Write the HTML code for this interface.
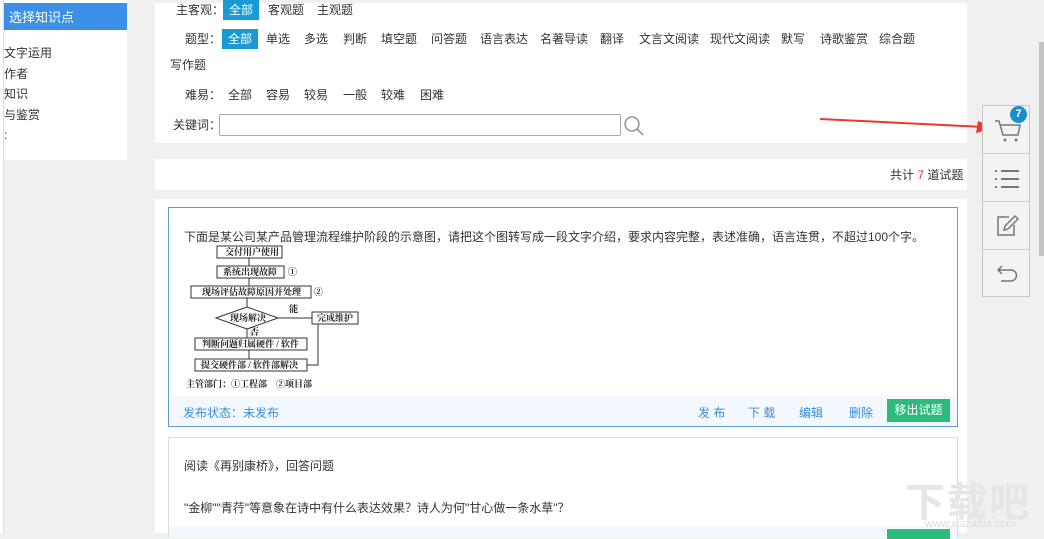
<!DOCTYPE html>
<html><head><meta charset="utf-8"><style>
*{margin:0;padding:0;box-sizing:border-box}
body{width:1044px;height:533px;overflow:hidden;background:#f0f0f0;font-family:"Liberation Sans","Noto Sans CJK SC",sans-serif;font-size:12px;color:#333;position:relative}
.a{position:absolute}
.side{left:4px;top:0;width:123px;height:160px;background:#fff}
.side .h{background:#3b8fe6;color:#fff;height:27px;margin-top:3px;padding:4px 0 0 5px;font-size:13px}
.side div.i{height:20.5px;line-height:20px;font-size:12px;color:#333}
.row span{position:absolute;top:0;line-height:20px}
.sel{background:#1a9ad2;color:#fff;padding:0 6px}
.tb{left:982px;top:105px;width:48px;height:192px;border:1px solid #c8c8c8;background:#f3f3f3}
.tb div{height:48px;border-bottom:1px solid #d0d0d0;position:relative}
</style></head><body>
<div class="a" style="left:0;top:0;width:4px;height:533px;background:#fff;border-right:1px solid #ddd"></div>
<div class="a side"><div class="h">选择知识点</div>
<div style="height:13px"></div>
<div class="i">文字运用</div><div class="i">作者</div><div class="i">知识</div><div class="i">与鉴赏</div><div class="i">:</div></div>

<div class="a" style="left:155px;top:3px;width:812px;height:140px;background:#fff"></div>
<div class="a" style="left:155px;top:159px;width:812px;height:31px;background:#fff"></div>
<div class="a" style="left:155px;top:199px;width:812px;height:334px;background:#fff"></div>

<div class="a row" style="left:0;top:0;width:900px;height:20px">
<span style="left:176px">主客观：</span><span class="sel" style="left:223px">全部</span><span style="left:268px">客观题</span><span style="left:317px">主观题</span></div>
<div class="a row" style="left:0;top:29px;width:960px;height:20px">
<span style="left:185px">题型：</span><span class="sel" style="left:222px">全部</span><span style="left:266px">单选</span><span style="left:304px">多选</span><span style="left:343px">判断</span><span style="left:381px">填空题</span><span style="left:431px">问答题</span><span style="left:480px">语言表达</span><span style="left:540px">名著导读</span><span style="left:600px">翻译</span><span style="left:639px">文言文阅读</span><span style="left:710px">现代文阅读</span><span style="left:781px">默写</span><span style="left:820px">诗歌鉴赏</span><span style="left:879px">综合题</span></div>
<div class="a row" style="left:0;top:55px;width:300px;height:20px"><span style="left:170px">写作题</span></div>
<div class="a row" style="left:0;top:85px;width:500px;height:20px">
<span style="left:185px">难易：</span><span style="left:228px">全部</span><span style="left:266px">容易</span><span style="left:304px">较易</span><span style="left:343px">一般</span><span style="left:381px">较难</span><span style="left:420px">困难</span></div>
<div class="a" style="left:173px;top:117px;line-height:16px">关键词：</div>
<div class="a" style="left:219px;top:114px;width:402px;height:22px;border:1px solid #aaa;border-radius:2px;background:#fff"></div>
<svg class="a" style="left:623px;top:114px" width="22" height="22"><circle cx="9" cy="10" r="7" fill="none" stroke="#888" stroke-width="1.3"/><line x1="14" y1="15" x2="20" y2="21" stroke="#888" stroke-width="1.3"/></svg>
<svg class="a" style="left:818px;top:115px" width="180" height="20"><path d="M2 4 L166 12" stroke="#e83a2f" stroke-width="2"/><path d="M160 6 L178 13 L158 18 Z" fill="#e83a2f"/></svg>

<div class="a" style="left:890px;top:167px;line-height:16px">共计 <span style="color:#d33">7</span> 道试题</div>

<div class="a" style="left:168px;top:207px;width:790px;height:220px;border:1px solid #5d9fc8;background:#fff">
<div style="position:absolute;left:15px;top:20px;font-size:12px">下面是某公司某产品管理流程维护阶段的示意图，请把这个图转写成一段文字介绍，要求内容完整，表述准确，语言连贯，不超过100个字。</div>
<svg style="position:absolute;left:15px;top:36px;font-family:'Liberation Serif','Noto Serif CJK SC',serif;font-size:9px;font-weight:bold" width="200" height="150">
<g fill="none" stroke="#333" stroke-width="1">
<rect x="33" y="2" width="65" height="12"/><rect x="33" y="22" width="67" height="12"/><rect x="7" y="42" width="120" height="12"/>
<path d="M32 74 L63 63 L94 74 L63 85 Z"/><rect x="128" y="68" width="46" height="12"/>
<rect x="11" y="94" width="112" height="12"/><rect x="11" y="115" width="112" height="12"/>
<path d="M65 14V22M65 34V42M63 54V63M63 85V94M65 106V115M94 74H128M123 121H134V80"/></g>
<g fill="#222"><text x="41" y="11">交付用户使用</text><text x="39" y="31">系统出现故障</text><text x="104" y="31">①</text><text x="18" y="51">现场评估故障原因并处理</text><text x="130" y="51">②</text>
<text x="46" y="77">现场解决</text><text x="105" y="68">能</text><text x="133" y="77">完成维护</text><text x="66" y="91">否</text>
<text x="18" y="103">判断问题归属硬件 / 软件</text><text x="17" y="124">提交硬件部 / 软件部解决</text><text x="2" y="143">主管部门：①工程部　②项目部</text></g></svg>
<div style="position:absolute;left:0;bottom:0;width:788px;height:30px;background:#f2f8fd">
<span style="position:absolute;left:14px;top:8px;color:#3a8ed8">发布状态：未发布</span>
<span style="position:absolute;left:529px;top:8px;color:#3a8ed8">发 布</span><span style="position:absolute;left:579px;top:8px;color:#3a8ed8">下 载</span><span style="position:absolute;left:630px;top:8px;color:#3a8ed8">编辑</span><span style="position:absolute;left:680px;top:8px;color:#3a8ed8">删除</span>
<span style="position:absolute;left:718px;top:3px;width:63px;height:23px;line-height:23px;text-align:center;background:#2dbb7c;color:#fff">移出试题</span></div></div>

<div class="a" style="left:168px;top:437px;width:790px;height:100px;border:1px solid #cfe0ea;background:#fff">
<div style="position:absolute;left:15px;top:19px">阅读《再别康桥》，回答问题</div>
<div style="position:absolute;left:15px;top:61px">"金柳""青荇"等意象在诗中有什么表达效果？诗人为何"甘心做一条水草"？</div>
<div style="position:absolute;left:0;top:88px;width:788px;height:12px;background:#f2f8fd"></div>
<div style="position:absolute;left:718px;top:91px;width:63px;height:10px;background:#2dbb7c"></div></div>

<div class="a tb"><div>
<svg style="position:absolute;left:11px;top:12px" width="28" height="26"><path d="M1 3 H5 L9 17 H24 L26 7 H6" fill="none" stroke="#777" stroke-width="1.5"/><circle cx="11" cy="22" r="1.5" fill="#777"/><circle cx="22" cy="22" r="1.5" fill="#777"/></svg>
<span style="position:absolute;left:27px;top:0;width:17px;height:17px;border-radius:50%;background:#1a8fd0;color:#fff;font-size:11px;font-weight:bold;text-align:center;line-height:17px">7</span></div>
<div><svg style="position:absolute;left:12px;top:15px" width="24" height="20"><g stroke="#777" stroke-width="2"><path d="M0 2h2M6 2h18M0 10h2M6 10h18M0 18h2M6 18h18"/></g></svg></div>
<div><svg style="position:absolute;left:13px;top:12px" width="24" height="24"><path d="M13 3H2V21H18V11" fill="none" stroke="#777" stroke-width="1.5"/><path d="M8 16L9 12L19 2L22 5L12 15Z" fill="none" stroke="#777" stroke-width="1.5"/></svg></div>
<div style="border:0"><svg style="position:absolute;left:14px;top:14px" width="22" height="20"><path d="M5 2L1 6L5 10M1 6H14A5 5 0 0 1 14 17H4" fill="none" stroke="#777" stroke-width="1.5"/></svg></div></div>

<div class="a" style="left:1039px;top:42px;width:5px;height:214px;background:#c4c4c4"></div>
<div class="a" style="left:905px;top:470px;font-size:40px;color:#e6e6e6;font-weight:bold;letter-spacing:2px">下载吧</div>
<div class="a" style="left:925px;top:518px;font-size:11px;color:#ddd">www.xiazaiba.com</div>
</body></html>
